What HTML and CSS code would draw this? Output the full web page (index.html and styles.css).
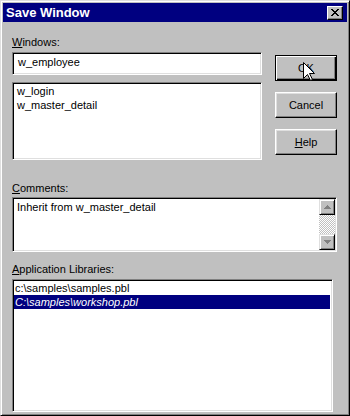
FILE: index.html
```html
<!DOCTYPE html>
<html lang="en">
<head>
    <meta charset="UTF-8">
    <title>Save Window</title>
    <link rel="stylesheet" href="styles.css">
</head>
<body>
    <div class="window">
        <div class="titlebar">
            <span class="title">Save Window</span>
            <span class="close">
                <svg width="8" height="7" viewBox="0 0 8 7"><path d="M0 0h2v1h1v1h2V1h1V0h2v1H7v1H6v1H5v1h1v1h1v1h1v1H6V6H5V5H3v1H2v1H0V6h1V5h1V4h1V3H2V2H1V1H0z" fill="#000"/></svg>
            </span>
        </div>

        <div class="content">
            <div class="top">
                <div class="fields">
                    <div class="label"><u>W</u>indows:</div>
                    <div class="field">w_employee</div>
                    <ul class="list windows-list">
                        <li>w_login</li>
                        <li>w_master_detail</li>
                    </ul>
                </div>
                <div class="buttons">
                    <div class="btn default">OK</div>
                    <div class="btn">Cancel</div>
                    <div class="btn"><u>H</u>elp</div>
                </div>
            </div>

            <div class="label comments-label"><u>C</u>omments:</div>
            <div class="memo">
                <div class="memo-text">Inherit from w_master_detail</div>
                <div class="vscroll">
                    <div class="arrow up"><svg width="7" height="4" viewBox="0 0 7 4"><path d="M3 0h1v1h1v1h1v1h1v1H0V3h1V2h1V1h1z" fill="#808080"/></svg></div>
                    <div class="track"></div>
                    <div class="arrow down"><svg width="7" height="4" viewBox="0 0 7 4"><path d="M0 0h7v1H6v1H5v1H4v1H3V3H2V2H1V1H0z" fill="#808080"/></svg></div>
                </div>
            </div>

            <div class="label libs-label"><u>A</u>pplication Libraries:</div>
            <ul class="list libs-list">
                <li>c:\samples\samples.pbl</li>
                <li class="selected">C:\samples\workshop.pbl</li>
            </ul>
        </div>

        <svg class="cursor" width="12" height="19" viewBox="0 0 12 19">
            <path d="M0.5 0.5V16.5L4.5 12.5L7.5 18.5L9.5 17.5L6.5 11.5H11.5Z" fill="#fff" stroke="#000" stroke-width="1"/>
        </svg>
    </div>
</body>
</html>
```

FILE: styles.css
```css
* {
    box-sizing: border-box;
}
body {
    margin: 0;
    background: #c0c0c0;
    font-family: "Liberation Sans", Arial, sans-serif;
    font-size: 11px;
    color: #000;
}
.window {
    position: relative;
    width: 350px;
    height: 416px;
    padding: 2px;
    background: #c0c0c0;
    border-top: 1px solid #dfdfdf;
    border-left: 1px solid #dfdfdf;
    border-right: 1px solid #000;
    border-bottom: 1px solid #000;
    box-shadow: inset 1px 1px #fff, inset -1px -1px #808080;
}
.titlebar {
    height: 19px;
    background: #000080;
    color: #fff;
    display: flex;
    align-items: center;
    justify-content: space-between;
    padding: 0 4px 0 3px;
}
.title {
    font-weight: bold;
    font-size: 13px;
}
.close {
    width: 16px;
    height: 14px;
    background: #c0c0c0;
    display: flex;
    align-items: center;
    justify-content: center;
    border-top: 1px solid #fff;
    border-left: 1px solid #fff;
    border-right: 1px solid #000;
    border-bottom: 1px solid #000;
    box-shadow: inset -1px -1px #808080;
}
.content {
    padding: 13px 10px 0 9px;
}
.top {
    display: flex;
}
.fields {
    width: 250px;
}
.label {
    height: 14px;
    line-height: 14px;
}
.field {
    margin-top: 3px;
    height: 23px;
    line-height: 19px;
    padding: 0 3px 0 5px;
    background: #fff;
    border-top: 1px solid #808080;
    border-left: 1px solid #808080;
    border-right: 1px solid #fff;
    border-bottom: 1px solid #fff;
    box-shadow: inset 1px 1px #000, inset -1px -1px #dfdfdf;
}
.list {
    list-style: none;
    margin: 0;
    padding: 1px 0 0 0;
    background: #fff;
    border-top: 1px solid #808080;
    border-left: 1px solid #808080;
    border-right: 1px solid #fff;
    border-bottom: 1px solid #fff;
    box-shadow: inset 1px 1px #000, inset -1px -1px #dfdfdf;
}
.list li {
    height: 14px;
    line-height: 14px;
    margin: 0 2px 0 1px;
    padding-left: 1px;
}
.windows-list {
    margin-top: 7px;
    height: 78px;
    padding-left: 2px;
}
.buttons {
    margin: 20px 0 0 13px;
    width: 62px;
    display: flex;
    flex-direction: column;
    gap: 11px;
}
.btn {
    height: 26px;
    display: flex;
    align-items: center;
    justify-content: center;
    border-top: 1px solid #fff;
    border-left: 1px solid #fff;
    border-right: 1px solid #000;
    border-bottom: 1px solid #000;
    box-shadow: inset -1px -1px #808080, inset 1px 1px #dfdfdf;
}
.btn.default {
    border: 1px solid #000;
    box-shadow: inset 1px 1px #fff, inset -1px -1px #000, inset -2px -2px #808080;
}
.comments-label {
    margin-top: 21px;
}
.memo {
    margin-top: 2px;
    width: 325px;
    height: 55px;
    display: flex;
    background: #fff;
    border-top: 1px solid #808080;
    border-left: 1px solid #808080;
    border-right: 1px solid #fff;
    border-bottom: 1px solid #fff;
    box-shadow: inset 1px 1px #000, inset -1px -1px #dfdfdf;
    padding: 1px;
}
.memo-text {
    flex: 1;
    padding: 1px 3px;
    line-height: 14px;
}
.vscroll {
    width: 16px;
    display: flex;
    flex-direction: column;
}
.arrow {
    height: 16px;
    background: #c0c0c0;
    display: flex;
    align-items: center;
    justify-content: center;
    border-top: 1px solid #dfdfdf;
    border-left: 1px solid #dfdfdf;
    border-right: 1px solid #000;
    border-bottom: 1px solid #000;
    box-shadow: inset 1px 1px #fff, inset -1px -1px #808080;
}
.track {
    flex: 1;
    background: repeating-conic-gradient(#c0c0c0 0 25%, #fff 0 50%) 0 0 / 2px 2px;
}
.libs-label {
    margin-top: 10px;
}
.libs-list {
    margin-top: 3px;
    width: 321px;
    height: 133px;
}
.list li.selected {
    background: #000080;
    color: #fff;
    font-style: italic;
}
.cursor {
    position: absolute;
    left: 302px;
    top: 61px;
}
```
